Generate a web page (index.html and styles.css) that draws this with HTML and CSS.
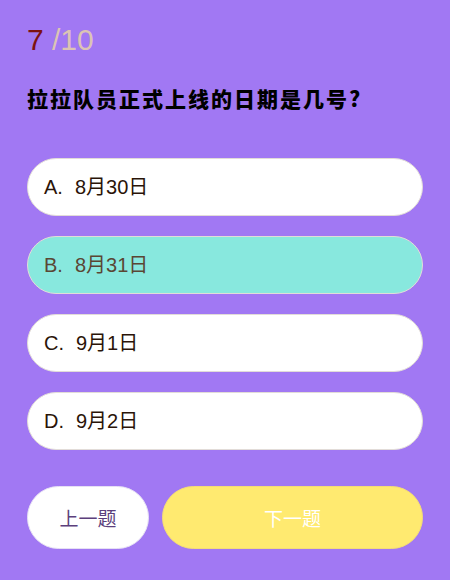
FILE: index.html
```html
<!DOCTYPE html>
<html>
<head>
	<meta charset="utf-8" />
	<title>答题</title>
	<link rel="stylesheet" href="styles.css">
</head>
<body>
	<div class="quiz">
		<div class="counter"><span class="current">7</span> <span class="total">/10</span></div>
		<div class="question">拉拉队员正式上线的日期是几号?</div>

		<!-- options -->
		<div class="options">
			<div class="option"><span class="text"><span class="label">A.</span>8月30日</span></div>
			<div class="option selected"><span class="text"><span class="label">B.</span>8月31日</span></div>
			<div class="option"><span class="text"><span class="label">C.</span>9月1日</span></div>
			<div class="option"><span class="text"><span class="label">D.</span>9月2日</span></div>
		</div>

		<div class="nav">
			<div class="btn prev">上一题</div>
			<div class="btn next">下一题</div>
		</div>
	</div>
</body>
</html>
```
FILE: styles.css
```css
html, body {
	margin: 0;
	padding: 0;
	background: #a178f3;
	font-family: "Liberation Sans", "Noto Sans CJK SC", sans-serif;
}
.quiz { padding: 22px 27px 0 27px; }
.counter { font-size: 30px; line-height: 36px; }
.counter .current { color: #7c1212; }
.counter .total { color: #dcc4b4; }
.question {
	margin-top: 26px;
	font-family: "Noto Sans CJK SC", sans-serif;
	font-size: 21px;
	letter-spacing: 2px;
	line-height: 28px;
	font-weight: 900;
	color: #000;
}
.options { margin-top: 46px; display: flex; flex-direction: column; gap: 20px; }
.option {
	box-sizing: border-box;
	height: 58px;
	display: flex;
	align-items: center;
	padding-left: 16px;
	background: #fff;
	border: 1px solid #e2dcd8;
	border-radius: 29px;
	font-size: 20px;
	color: #2a1408;
}
.option .text { line-height: 28px; }
.option .label { margin-right: 12px; }
.option.selected { background: #88e8de; color: #5a4634; }
.nav { margin-top: 36px; display: flex; gap: 13px; }
.btn {
	box-sizing: border-box;
	height: 63px;
	border-radius: 32px;
	display: flex;
	align-items: center;
	justify-content: center;
	font-size: 19px;
}
.prev { width: 122px; background: #fff; color: #5c3f7c; border: 1px solid #e6e0f4; }
.next { flex: 1; background: #ffea70; color: #fff; border: 1px solid #f4dc76; }
```
